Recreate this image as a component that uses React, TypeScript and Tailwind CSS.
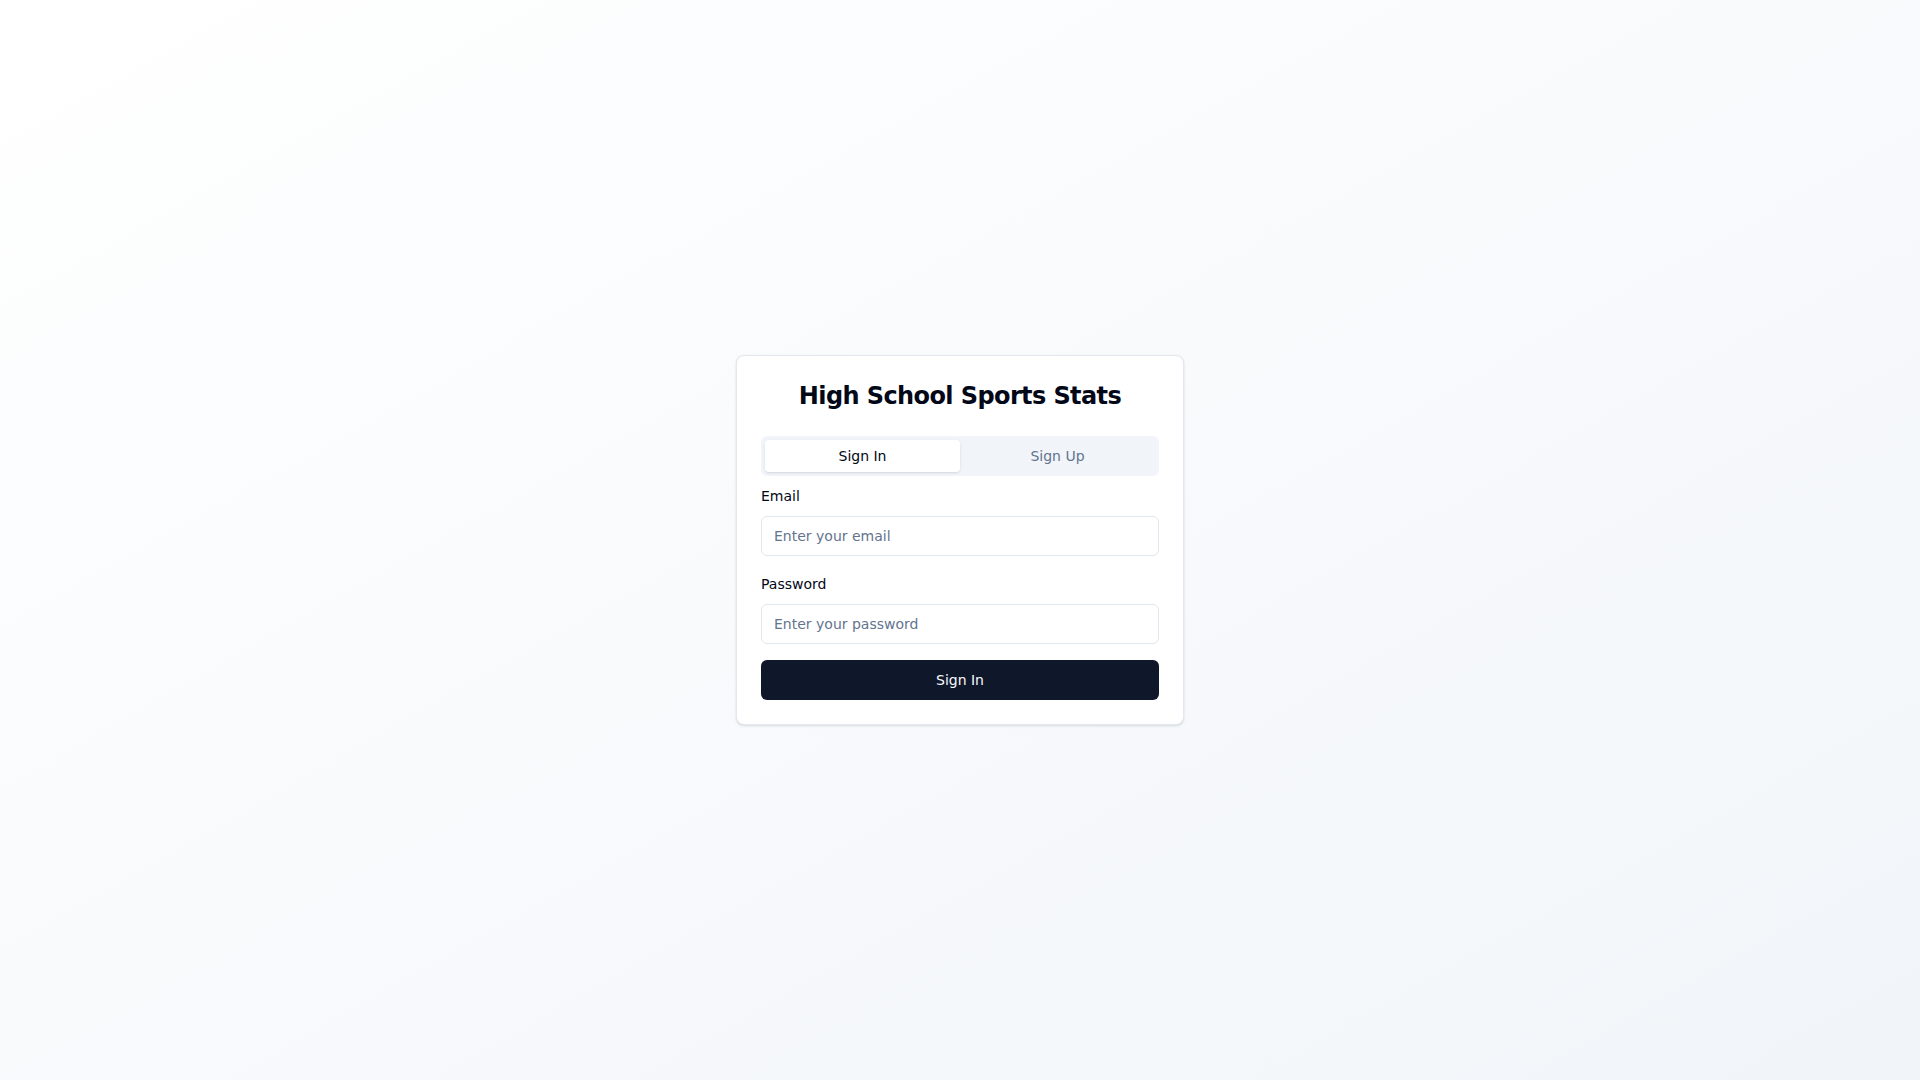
import React, { useState } from "react";

export default function App() {
  const [tab, setTab] = useState<"in" | "up">("in");
  return (
    <div className="min-h-screen w-full flex items-center justify-center bg-gradient-to-br from-white to-slate-100 font-['DejaVu_Sans',sans-serif] text-[#020817]">
      <div className="w-[448px] rounded-lg border border-slate-200 bg-white shadow-sm">
        <div className="p-6">
          <h1 className="text-2xl leading-8 font-bold tracking-tight text-center text-[#020817]">High School Sports Stats</h1>
        </div>
        <div className="px-6 pb-6">
          <div className="h-10 p-1 rounded-md bg-slate-100 grid grid-cols-2">
            <button
              onClick={() => setTab("in")}
              className={`h-8 rounded-sm text-sm ${tab === "in" ? "bg-white text-[#020817] shadow-sm" : "text-slate-500"}`}
            >
              Sign In
            </button>
            <button
              onClick={() => setTab("up")}
              className={`h-8 rounded-sm text-sm ${tab === "up" ? "bg-white text-[#020817] shadow-sm" : "text-slate-500"}`}
            >
              Sign Up
            </button>
          </div>
          <form className="mt-2.5 flex flex-col" onSubmit={(e) => e.preventDefault()}>
            <label className="block text-sm leading-5 text-[#020817]">Email</label>
            <input
              type="email"
              placeholder="Enter your email"
              className="mt-2.5 h-10 w-full rounded-md border border-slate-200 bg-white px-3 text-sm placeholder:text-slate-500 outline-none"
            />
            <label className="mt-[18px] block text-sm leading-5 text-[#020817]">Password</label>
            <input
              type="password"
              placeholder="Enter your password"
              className="mt-2.5 h-10 w-full rounded-md border border-slate-200 bg-white px-3 text-sm placeholder:text-slate-500 outline-none"
            />
            <button
              type="submit"
              className="mt-4 h-10 w-full rounded-md bg-slate-900 text-sm text-slate-50"
            >
              {tab === "in" ? "Sign In" : "Sign Up"}
            </button>
          </form>
        </div>
      </div>
    </div>
  );
}
